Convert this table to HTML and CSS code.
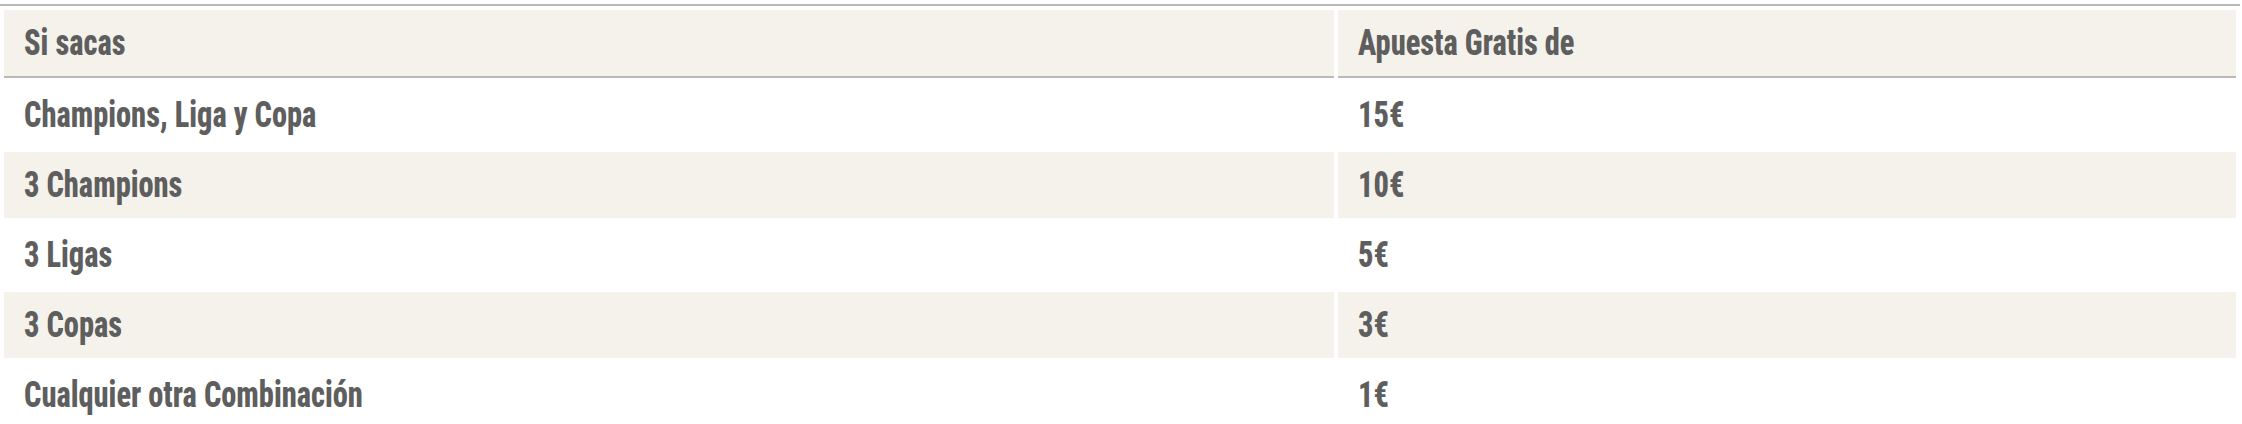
FILE: index.html
```html
<!DOCTYPE html>
<html lang="es">
<head>
<meta charset="utf-8">
<title>Premios</title>
<link rel="stylesheet" href="styles.css">
</head>
<body>
<div class="wrap">
  <table class="prizes">
    <colgroup>
      <col class="col-a">
      <col class="col-b">
    </colgroup>
    <thead>
      <tr><th><span class="txt">Si sacas</span></th><th><span class="txt">Apuesta Gratis de</span></th></tr>
    </thead>
    <tbody>
      <tr><td><span class="txt">Champions, Liga y Copa</span></td><td><span class="txt">15€</span></td></tr>
      <tr class="alt"><td><span class="txt">3 Champions</span></td><td><span class="txt">10€</span></td></tr>
      <tr><td><span class="txt">3 Ligas</span></td><td><span class="txt">5€</span></td></tr>
      <tr class="alt"><td><span class="txt">3 Copas</span></td><td><span class="txt">3€</span></td></tr>
      <tr><td><span class="txt">Cualquier otra Combinación</span></td><td><span class="txt">1€</span></td></tr>
    </tbody>
  </table>
</div>
</body>
</html>
```
FILE: styles.css
```css
html, body {
  margin: 0;
  padding: 0;
  background: #ffffff;
}
.wrap {
  padding-top: 4px;
  width: 2240px;
}
.prizes {
  width: 2240px;
  table-layout: fixed;
  border-collapse: separate;
  border-spacing: 4px;
  border-top: 2px solid #b9b9b9;
  font-family: "Roboto Condensed", "Liberation Sans Narrow", "Liberation Sans", sans-serif;
  font-weight: 800;
  font-size: 37px;
  color: #5e5e5e;
}
.col-a { width: 1330px; }
.col-b { width: 898px; }
.prizes th,
.prizes td {
  text-align: left;
  padding: 1px 0 1px 20px;
  line-height: 64px;
  height: 64px;
  white-space: nowrap;
  font-weight: 800;
  overflow: hidden;
}
.prizes th {
  background: #f5f2eb;
  border-bottom: 2px solid #b9b9b9;
}
.prizes tr.alt td {
  background: #f5f2eb;
}
.txt {
  display: inline-block;
  transform: scaleX(0.822);
  transform-origin: 0 50%;
}
```
